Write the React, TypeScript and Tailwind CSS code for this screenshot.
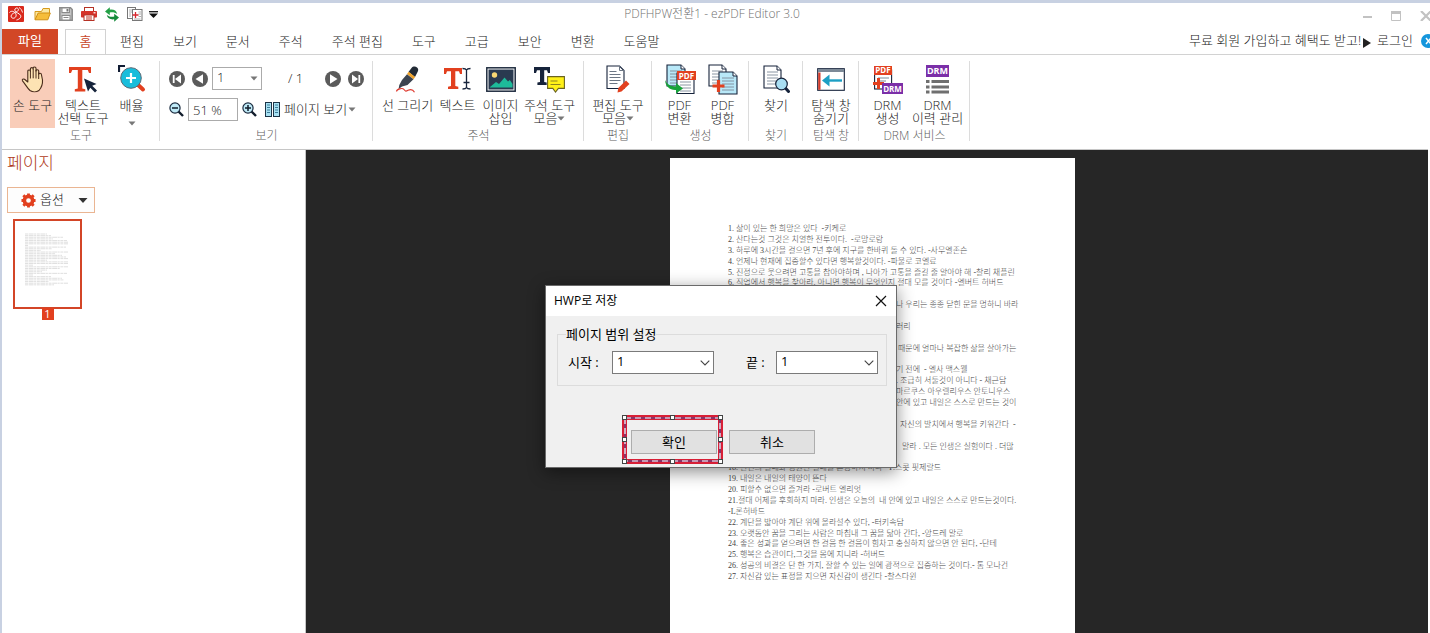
import type { ReactNode } from "react";

const tabs = ["편집", "보기", "문서", "주석", "주석 편집", "도구", "고급", "보안", "변환", "도움말"];

type Line = { text: string; tail?: boolean };

const lines: Line[] = [
  { text: "1. 삶이 있는 한 희망은 있다  -키케로" },
  { text: "2. 산다는것 그것은 치열한 전투이다.  -로망로랑" },
  { text: "3. 하루에 3시간을 걸으면 7년 후에 지구를 한바퀴 돌 수 있다. -사무엘존슨" },
  { text: "4. 언제나 현재에 집중할수 있다면 행복할것이다. -파울로 코엘료" },
  { text: "5. 진정으로 웃으려면 고통을 참아야하며 , 나아가 고통을 즐길 줄 알아야 해 -찰리 채플린" },
  { text: "6. 직업에서 행복을 찾아라. 아니면 행복이 무엇인지 절대 모를 것이다 -엘버트 허버드" },
  { text: "" },
  { text: "나 우리는 종종 닫힌 문을 멍하니 바라", tail: true },
  { text: "" },
  { text: "러리", tail: true },
  { text: "" },
  { text: " 때문에 얼마나 복잡한 삶을 살아가는", tail: true },
  { text: "" },
  { text: "기 전에  - 엘사 맥스웰", tail: true },
  { text: ". 조급히 서둘것이 아니다 - 채근담", tail: true },
  { text: "마르쿠스 아우렐리우스 안토니우스", tail: true },
  { text: "안에 있고 내일은 스스로 만드는 것이", tail: true },
  { text: "" },
  { text: "  자신의 발치에서 행복을 키워간다  -", tail: true },
  { text: "" },
  { text: "   말라 . 모든 인생은 실험이다 . 더많", tail: true },
  { text: "" },
  { text: "18. 한번의 실패와 영원한 실패를 혼동하지 마라  -F.스콧 핏제랄드" },
  { text: "19. 내일은 내일의 태양이 뜬다" },
  { text: "20. 피할수 없으면 즐겨라 -로버트 엘리엇" },
  { text: "21.절대 어제를 후회하지 마라. 인생은 오늘의  내 안에 있고 내일은 스스로 만드는것이다." },
  { text: "-L론허바드" },
  { text: "22. 계단을 밟아야 계단 위에 올라설수 있다, -터키속담" },
  { text: "23. 오랫동안 꿈을 그리는 사람은 마침내 그 꿈을 닮아 간다, -앙드레 말로" },
  { text: "24. 좋은 성과를 얻으려면 한 걸음 한 걸음이 힘차고 충실하지 않으면 안 된다, -단테" },
  { text: "25. 행복은 습관이다,그것을 몸에 지니라 -허버드" },
  { text: "26. 성공의 비결은 단 한 가지, 잘할 수 있는 일에 광적으로 집중하는 것이다.- 톰 모나건" },
  { text: "27. 자신감 있는 표정을 지으면 자신감이 생긴다 -찰스다윈" },
];

const thumbWidths = [22, 26, 38, 28, 42, 43, 43, 3, 41, 27, 16, 43, 30, 37, 41, 43, 22, 43, 43, 8, 43, 35, 22, 17, 42, 8, 26, 37, 39, 24, 43, 29];

function Caret({ className = "" }: { className?: string }) {
  return (
    <svg aria-hidden="true" viewBox="0 0 8 5" className={`h-[5px] w-2 shrink-0 ${className}`}>
      <path d="M0.5 0.5h7L4 4.5z" fill="currentColor" />
    </svg>
  );
}

function LogoIcon() {
  return (
    <svg viewBox="0 0 16 16" className="size-4">
      <rect width="16" height="16" rx="1" fill="#d9291c" />
      <path d="M1.500 6.500C3 4.600 6 5 7.500 7.200c1.700 2.700-.3 5.300-2.600 5-2.600-.5-2.200-3.700.6-5 2.600-1.200 5.300-2 4.900-4C9.900 1.200 6.500 1.800 6.800 4.200c.5 2.600 5 3 5.900 5.400.6 2-1.500 3.800-4.200 4.400" fill="none" stroke="#fff" strokeWidth="1" />
      <path d="M11 1.500c2 1 3 3 3.500 5" fill="none" stroke="#fff" strokeWidth=".9" />
    </svg>
  );
}

function FolderIcon() {
  return (
    <svg viewBox="0 0 17 14" className="h-[14px] w-[17px]">
      <path d="M1 12.500V4.500h6.500l1.500-3h6.500v4.500" fill="#fbe7a0" stroke="#d79a1c" />
      <path d="M1 12.800 4.200 6H16.300l-2.500 6.800z" fill="#f6bd3a" stroke="#d08f14" strokeLinejoin="round" />
    </svg>
  );
}

function SaveIcon() {
  return (
    <svg viewBox="0 0 14 14" className="size-[14px]">
      <path d="M.8.800h10.700l1.700 1.700v10.700H.8z" fill="#c4c4c4" stroke="#8a8a8a" strokeWidth="1.500" />
      <rect x="3" y="1" width="7.500" height="4.500" fill="#fff" stroke="#8a8a8a" />
      <rect x="7.500" y="2" width="2" height="2.500" fill="#777" />
      <rect x="3" y="8.500" width="8" height="4.500" fill="#fff" stroke="#8a8a8a" />
      <path d="M4.500 10.500h5" stroke="#8a8a8a" />
    </svg>
  );
}

function PrintIcon() {
  return (
    <svg viewBox="0 0 16 14" className="h-[14px] w-4">
      <rect x="3.500" y=".5" width="9" height="4" fill="#fff" stroke="#b53124" />
      <rect x="0" y="4" width="16" height="6.500" rx=".8" fill="#d5332a" />
      <rect x="3" y="8" width="10" height="5.500" fill="#fff" stroke="#b53124" />
      <path d="M5 10h6M5 12h6" stroke="#c0392b" />
      <rect x="12.500" y="5.200" width="2" height="1.200" fill="#fff" />
    </svg>
  );
}

function RefreshIcon() {
  return (
    <svg viewBox="0 0 14 15" className="h-[15px] w-[14px]">
      <path d="M0 4.500 4.800.2v2.500c4-.5 6.700 1 7.400 4.300C10 5.200 7.500 5 4.800 5.400V8.200z" fill="#22a045" />
      <path d="M14 10.500 9.200 14.800v-2.500c-4 .5-6.700-1-7.400-4.300C4 9.800 6.500 10 9.200 9.600V6.800z" fill="#158a3a" />
    </svg>
  );
}

function CompareIcon() {
  return (
    <svg viewBox="0 0 16 14" className="h-[14px] w-4">
      <rect x=".5" y=".5" width="8" height="11" fill="#fff" stroke="#777" />
      <path d="M2 3h5M2 5h3M2 7h2M2 9h2" stroke="#999" strokeWidth=".8" />
      <rect x="5.500" y="2.500" width="9.500" height="11" fill="#fff" stroke="#777" />
      <path d="M11.500 5h2.500M11.500 7h2.500M11.500 9.500h2.500M7 12h6.500" stroke="#999" strokeWidth=".8" />
      <path d="M8.500 5v6M5.500 8h6" stroke="#d9262c" strokeWidth="1.300" />
    </svg>
  );
}

function HandIcon() {
  return (
    <svg viewBox="0 0 24 27" className="h-[27px] w-6">
      <path d="M9 24.500C6.500 22.500 4.500 18.500 1.500 14.800c-.8-1.300.8-2.300 2-1.500L6.800 16V5.200c0-1.700 2.600-1.700 2.600 0V3c0-1.800 2.800-1.800 2.800 0v-.700c0-1.800 2.800-1.800 2.800 0V5c0-1.700 2.700-1.700 2.700 0v3.300c.1-1.500 2.700-1.500 2.700.2L21.500 14c.3 4-1 7.500-3.500 10.500-2.500 1.700-6.500 1.700-9 0z" fill="#fde3b3" stroke="#4a2c1c" strokeWidth="1.100" strokeLinejoin="round" />
      <path d="M9.400 5v7.500M12.200 3v9.300M15 4v8.500M17.700 6.500v6.500" stroke="#4a2c1c" strokeWidth="1" />
    </svg>
  );
}

function TextSelectIcon() {
  return (
    <svg viewBox="0 0 30 27" className="h-[27px] w-[30px]">
      <path d="M1 1h22v6h-2L19.800 4h-5.500v18.500l3 .7V25.500H6.800V23.200l3-.7V4H4.300L3 7H1z" fill="#e2401f" />
      <path d="M16 12.500 28.500 18l-4.300 1.700L29 24.600 27 26.600 22.300 21.800 20 25.500z" fill="#16233b" />
    </svg>
  );
}

function ZoomAreaIcon() {
  return (
    <svg viewBox="0 0 28 28" className="size-7">
      <path d="M1 7V1h6" fill="none" stroke="#111c33" strokeWidth="2.200" />
      <path d="m18.500 18.500 6.500 6" stroke="#e2401f" strokeWidth="4" strokeLinecap="round" />
      <circle cx="13" cy="13" r="10.300" fill="#19bddb" stroke="#5a6b78" strokeWidth="1" />
      <path d="M13 8v10M8 13h10" stroke="#fff" strokeWidth="2.200" />
    </svg>
  );
}

function NavIcon({ kind }: { kind: "first" | "prev" | "next" | "last" }) {
  const flip = kind === "next" || kind === "last";
  const bar = kind === "first" || kind === "last";
  return (
    <svg viewBox="0 0 16 16" className={flip ? "size-4 -scale-x-100" : "size-4"}>
      <circle cx="8" cy="8" r="8" fill="#5b5b5b" />
      {bar ? (
        <>
          <path d="M4.700 4v8" stroke="#fff" strokeWidth="1.800" />
          <path d="M12 3.500v9L6 8z" fill="#fff" />
        </>
      ) : (
        <path d="M11 3.200v9.600L3.500 8z" fill="#fff" />
      )}
    </svg>
  );
}

function MagnifierIcon({ plus }: { plus?: boolean }) {
  return (
    <svg viewBox="0 0 15 15" className="size-[15px]">
      <path d="m9.500 9.500 4.500 4.500" stroke="#111c2b" strokeWidth="2.400" />
      <circle cx="6" cy="6" r="5.100" fill="#bfeaf7" stroke="#1b2c40" strokeWidth="1.200" />
      <path d={plus ? "M3 6h6M6 3v6" : "M3 6h6"} stroke="#111c2b" strokeWidth="1.500" />
    </svg>
  );
}

function PagesIcon() {
  return (
    <svg viewBox="0 0 15 15" className="size-[15px]">
      <rect x=".5" y=".5" width="6" height="14" fill="#a8e1f3" stroke="#1c3447" />
      <rect x="8.500" y=".5" width="6" height="14" fill="#a8e1f3" stroke="#1c3447" />
      <path d="M2 3h3M2 5.500h3M2 8h3M2 10.500h3M10 3h3M10 5.500h3M10 8h3M10 10.500h3" stroke="#3d7e99" />
    </svg>
  );
}

function PenIcon() {
  return (
    <svg viewBox="0 0 28 28" className="size-7">
      <path d="M17.500 3c2.500-3.500 8.300-.5 6.300 3.500L21 12l-6.500-5z" fill="#222b36" />
      <path d="m14.700 6.800 6.400 5.200-1.600 2.200-6.500-5.200z" fill="#f0a32a" />
      <path d="m13 9.200 6.500 5L13.500 20l-5.500 1.500-3.500 2.700.8-4.200 2.700-5z" fill="#3c4450" />
      <path d="M2.500 26.500c0-2.500 6-4 7.500-2s2 2 4 .8c2.500-1.300 5-.8 6.500 2" fill="none" stroke="#df3b30" strokeWidth="1.200" />
    </svg>
  );
}

function TextIcon() {
  return (
    <svg viewBox="0 0 27 24" className="h-6 w-[27px]">
      <path d="M0 1h18v6h-2l-1-2.800h-3.700V19l3 .7V22H4v-2.300l3-.7V4.200H3L2 7H0z" fill="#e2401f" />
      <path d="M18.500 1.500c2 0 3.500.5 4 1.500.5-1 2-1.500 4-1.500M22.500 3v17M19.500 15.500h6M18.500 22c2 0 3.500-.5 4-1.500.5 1 2 1.500 4 1.500" fill="none" stroke="#16233b" strokeWidth="1.300" />
    </svg>
  );
}

function ImageIcon() {
  return (
    <svg viewBox="0 0 30 25" className="h-[25px] w-[30px]">
      <rect x=".8" y=".8" width="28.400" height="23.400" fill="#fff" stroke="#1f2c3f" strokeWidth="1.500" />
      <rect x="2.500" y="2.500" width="25" height="20" fill="#2a3a50" />
      <circle cx="8.500" cy="8" r="2.700" fill="#f7d774" />
      <path d="m4 20 6-5 3 2 5.500-6.500 3.500 4 1.800-1.500L26.500 17v3.500H4z" fill="#1dbb9a" />
    </svg>
  );
}

function NoteIcon() {
  return (
    <svg viewBox="0 0 31 27" className="h-[27px] w-[31px]">
      <path d="M0 1h16v6h-2l-1-2.800h-2.800V16l2.500.6V19H3.400v-2.400L6 16V4.200H3L2 7H0z" fill="#16233b" />
      <path d="M13.600 10.600h16.800v11.800h-6L21.500 26l-2.700-3.600h-5.200z" fill="#fff017" stroke="#6b6420" strokeWidth="1.100" />
      <path d="M16.500 15h7M16.500 18.500h10" stroke="#8d8320" strokeWidth="1.200" />
    </svg>
  );
}

function EditPageIcon() {
  return (
    <svg viewBox="0 0 24 28" className="h-7 w-6">
      <path d="M1 1h12.500L18 5.500V23.500H1z" fill="#fff" stroke="#16233b" strokeWidth="1.100" />
      <path d="M13.500 1v4.500H18M3.500 6.500h7M3.500 9.500h11M3.500 12.500h11M3.500 15.500h11M3.500 18.500h8" fill="none" stroke="#6c7684" strokeWidth="1" />
      <path d="m20 15.500 3.500 3.500-8 7.500-4 1 .8-4.500z" fill="#e2401f" />
    </svg>
  );
}

function Sheet({ x, y, w, h, fill }: { x: number; y: number; w: number; h: number; fill: string }) {
  const fold = 4;
  const rows = [6, 9, 12, 15, 18].filter((row) => row < h - 2);
  return (
    <g transform={`translate(${x} ${y})`}>
      <path d={`M0 0H${w - fold}L${w} ${fold}V${h}H0z`} fill={fill} stroke="#16233b" strokeWidth="1.100" />
      <path d={`M${w - fold} 0V${fold}H${w}`} fill="#fff" stroke="#16233b" strokeWidth="1" />
      {rows.map((row) => (
        <path key={row} d={`M3 ${row}H${w - 3}`} stroke="#7d8b99" strokeWidth=".9" />
      ))}
    </g>
  );
}

function ConvertIcon() {
  return (
    <svg viewBox="0 0 32 31" className="h-[31px] w-8">
      <Sheet x={3} y={1} w={18} h={21} fill="#b8e8f8" />
      <Sheet x={13} y={9} w={17} h={20.500} fill="#fff" />
      <rect x="13" y="7" width="19" height="9" fill="#e2401f" />
      <text x="22.500" y="14.500" textAnchor="middle" fontSize="8" fontWeight="700" fontFamily="Open Sans, sans-serif" fill="#fff">PDF</text>
      <path d="M1 16c2 4.500 6 6.500 11 6.500V19l7 5.500-7 5V26C6 26.500 1.500 22.500 1 16z" fill="#17a33a" />
    </svg>
  );
}

function MergeIcon() {
  return (
    <svg viewBox="0 0 30 31" className="h-[31px] w-[30px]">
      <Sheet x={1} y={1} w={17} h={21} fill="#fff" />
      <Sheet x={11} y={8} w={18} h={22} fill="#b8e8f8" />
      <path d="M10.500 16v12M4.500 22h12" stroke="#e2401f" strokeWidth="3.200" />
    </svg>
  );
}

function FindIcon() {
  return (
    <svg viewBox="0 0 27 28" className="h-7 w-[27px]">
      <Sheet x={1} y={1} w={17} h={22} fill="#fff" />
      <path d="m21.500 22 4 4.500" stroke="#16233b" strokeWidth="3" strokeLinecap="round" />
      <circle cx="18.500" cy="19" r="5.800" fill="#a9dff4" stroke="#16233b" strokeWidth="1.200" />
    </svg>
  );
}

function PaneIcon() {
  return (
    <svg viewBox="0 0 28 23" className="h-[23px] w-7">
      <rect x=".7" y=".7" width="26.600" height="21.600" fill="#fff" stroke="#16233b" strokeWidth="1.100" />
      <rect x="1" y="1" width="26" height="3" fill="#7c8997" />
      <rect x="1.200" y="4.500" width="2.300" height="17.300" fill="#d23b2b" />
      <path d="M7 12.500h18" stroke="#1d9fc4" strokeWidth="2.400" />
      <path d="M5 12.500 12.500 6.500v12z" fill="#1d9fc4" />
    </svg>
  );
}

function DrmCreateIcon() {
  return (
    <svg viewBox="0 0 31 29" className="h-[29px] w-[31px]">
      <rect x="2.600" y="5" width="17" height="19" fill="#fff" stroke="#16233b" strokeWidth="1.100" />
      <path d="M6 13h11M6 16h8" stroke="#7d8b99" />
      <rect x="2" y="1" width="18" height="9" fill="#e2401f" />
      <text x="11" y="8.400" textAnchor="middle" fontSize="8" fontWeight="700" fontFamily="Open Sans, sans-serif" fill="#fff">PDF</text>
      <path d="M6.500 13v11M1 18.500h11" stroke="#e2401f" strokeWidth="3" />
      <rect x="10" y="18" width="21" height="11" fill="#7b2fa8" />
      <text x="20.500" y="26.500" textAnchor="middle" fontSize="8" fontWeight="700" fontFamily="Open Sans, sans-serif" fill="#fff">DRM</text>
    </svg>
  );
}

function DrmHistoryIcon() {
  return (
    <svg viewBox="0 0 24 29" className="h-[29px] w-6">
      <rect x="0" y="0" width="23" height="12" fill="#7b2fa8" />
      <text x="11.500" y="9.200" textAnchor="middle" fontSize="9" fontWeight="700" fontFamily="Open Sans, sans-serif" fill="#fff">DRM</text>
      <path d="M0 16.500h3.500M5.500 16.500H23M0 22h3.500M5.500 22H23M0 27h3.500M5.500 27H23" stroke="#6f6f6f" strokeWidth="3" />
    </svg>
  );
}

function GearIcon() {
  return (
    <svg viewBox="0 0 16 16" className="size-[15px]">
      <circle cx="8" cy="8" r="4.400" fill="none" stroke="#e2401f" strokeWidth="3.800" />
      <path d="M8 .5v3M8 12.500v3M.5 8h3M12.500 8h3M2.500 2.500l2.200 2.200M11.300 11.300l2.200 2.200M2.500 13.500l2.200-2.200M11.300 4.700l2.200-2.200" stroke="#e2401f" strokeWidth="3" />
    </svg>
  );
}

function ToolButton({ icon, label, width, active, arrow }: { icon: ReactNode; label: string[]; width: string; active?: boolean; arrow?: "inline" | "below" }) {
  return (
    <button type="button" className={`flex h-[69px] shrink-0 flex-col items-center whitespace-nowrap ${width} ${active ? "bg-[#f9cdb9]" : ""}`}>
      <span className="flex h-10 items-center justify-center">{icon}</span>
      {label.map((row, i) => (
        <span key={row} className="flex items-center text-[13px] leading-[13px]">
          {row}
          {arrow === "inline" && i === label.length - 1 && <Caret className="text-[#777]" />}
        </span>
      ))}
      {arrow === "below" && <Caret className="mt-[9px] text-[#777]" />}
    </button>
  );
}

function Group({ title, width, children }: { title: string; width: string; children: ReactNode }) {
  return (
    <section aria-label={title} className={`relative flex shrink-0 flex-col ${width}`}>
      <div className="flex h-[69px] justify-center">{children}</div>
      <h2 className="text-center text-[12px] leading-4 text-[#5f5f5f]">{title}</h2>
      <span className="absolute top-0.5 right-0 h-20 w-px bg-[#dcdcdc]" />
    </section>
  );
}

function PageSelect({ id }: { id: string }) {
  return (
    <span className="relative">
      <select id={id} className="block h-[23px] w-[102px] appearance-none border border-[#7a7a7a] bg-white px-1 pb-0.5 text-[13px] leading-[19px] text-black">
        <option>1</option>
      </select>
      <svg aria-hidden="true" viewBox="0 0 10 6" className="pointer-events-none absolute top-[9px] right-1 h-1.5 w-2.5">
        <path d="m.7.700 4.300 4.300L9.300.700" fill="none" stroke="#444" strokeWidth="1.100" />
      </svg>
    </span>
  );
}

function Marker() {
  const spots = [
    "-top-[2px] -left-[2px]", "-top-[2px] left-[46px]", "-top-[2px] -right-[2px]",
    "top-[20px] -left-[2px]", "top-[20px] -right-[2px]",
    "-bottom-[2px] -left-[2px]", "-bottom-[2px] left-[46px]", "-bottom-[2px] -right-[2px]",
  ];
  return (
    <span aria-hidden="true" className="pointer-events-none absolute -top-[15px] -left-[9px] h-[49px] w-[101px] border-[5px] border-[#d81f36]">
      <svg className="absolute -top-[3px] -left-[3px] h-[45px] w-[97px]">
        <rect x="1" y="1" width="95" height="43" fill="none" stroke="#8a3468" strokeWidth="2" />
        <rect x="1" y="1" width="95" height="43" fill="none" stroke="#fff" strokeWidth="1.200" strokeDasharray="6 4" />
      </svg>
      <span className="absolute -inset-[3px]">
        {spots.map((spot) => (
          <span key={spot} className={`absolute size-[5px] border border-[#444] bg-white ${spot}`} />
        ))}
      </span>
    </span>
  );
}

function SaveDialog() {
  return (
    <div role="dialog" aria-labelledby="save-title" className="absolute top-[282px] left-[543px] w-[352px] border border-[#6a6a6a] bg-[#f0f0f0] pb-[13px] text-[13px] font-normal text-black shadow-[0_4px_16px_rgba(0,0,0,0.45)]">
      <header className="flex h-[30px] items-center justify-between bg-white pr-[9px] pl-2">
        <h2 id="save-title" className="text-[12px]">HWP로 저장</h2>
        <button type="button" aria-label="닫기">
          <svg viewBox="0 0 12 12" className="size-3">
            <path d="m1 1 10 10M11 1 1 11" stroke="#111" strokeWidth="1.200" />
          </svg>
        </button>
      </header>
      <fieldset className="mr-[13px] ml-[11px] mt-2 h-[62px] border border-[#dcdcdc] px-2">
        <legend className="text-[13px] leading-5">페이지 범위 설정</legend>
        <div className="flex items-center pt-[7px] pl-0.5">
          <label htmlFor="page-from" className="w-11">시작 :</label>
          <PageSelect id="page-from" />
          <label htmlFor="page-to" className="ml-8 w-[30px] whitespace-nowrap">끝 :</label>
          <PageSelect id="page-to" />
        </div>
      </fieldset>
      <footer className="mt-[44px] flex justify-center gap-3 pl-1">
        <span className="relative">
          <button type="button" className="block h-6 w-[86px] border border-[#adadad] bg-[#e1e1e1] leading-5">확인</button>
          <Marker />
        </span>
        <button type="button" className="block h-6 w-[86px] border border-[#adadad] bg-[#e1e1e1] leading-5">취소</button>
      </footer>
    </div>
  );
}

export default function App() {
  return (
    <div lang="ko" className="relative flex h-screen flex-col overflow-hidden border-t-[3px] border-l-2 border-[#c8d1e2] bg-white pr-0.5 font-['Open_Sans','Noto_Sans_CJK_KR',sans-serif] text-[13px] font-light text-[#222]">
      <header className="-mr-0.5 grid h-[26px] shrink-0 grid-cols-[1fr_auto_1fr] items-center overflow-hidden">
        <div className="flex items-center gap-2 pb-1 pl-1.5">
          <LogoIcon />
          <span className="ml-0.5 flex"><FolderIcon /></span>
          <SaveIcon />
          <PrintIcon />
          <RefreshIcon />
          <span className="flex"><CompareIcon /></span>
          <svg viewBox="0 0 9 7" className="-ml-0.5 h-[7px] w-[9px]">
            <path d="M0 .7h9" stroke="#111" strokeWidth="1.300" />
            <path d="M0 2.500h9L4.500 7z" fill="#111" />
          </svg>
        </div>
        <h1 className="pr-2 pb-1 text-[12px] text-[#707070]">PDFHPW전환1 - ezPDF Editor 3.0</h1>
        <div className="-mr-0.5 flex items-center justify-end gap-[19px] text-[#c2c2c2]">
          <svg viewBox="0 0 10 10" className="size-2.5"><path d="M1 6h9" stroke="currentColor" strokeWidth="2" /></svg>
          <svg viewBox="0 0 10 10" className="size-2.5"><path d="M.5.500h9v9h-9z" fill="none" stroke="currentColor" strokeWidth="1" /><path d="M0 1.500h10" stroke="currentColor" strokeWidth="3" /></svg>
          <svg viewBox="0 0 12 10" className="h-2.5 w-3"><path d="m1 0 10 10M11 0 1 10" stroke="currentColor" strokeWidth="2.200" /></svg>
        </div>
      </header>

      <nav className="-mr-0.5 flex h-[26px] shrink-0 overflow-hidden border-b border-[#d2d2d2] whitespace-nowrap">
        <button type="button" className="h-[25px] w-14 bg-[#d24726] pb-0.5 font-normal text-white">파일</button>
        <button type="button" className="ml-[7px] h-[26px] w-[41px] border border-b-0 border-[#d2d2d2] bg-white pb-0.5 font-normal text-[#c8472b]">홈</button>
        <div className="flex items-center gap-[29px] pl-3.5">
          {tabs.map((tab) => (
            <button key={tab} type="button">{tab}</button>
          ))}
        </div>
        <div className="-mr-[7px] ml-auto flex items-center gap-1.5 pb-0.5">
          <a href="#join" className="flex items-center">
            무료 회원 가입하고 혜택도 받고!
            <svg viewBox="0 0 8 10" className="mt-1 ml-0.5 h-2.5 w-2"><path d="M0 0v10l8-5z" fill="#222" /></svg>
          </a>
          <a href="#login">로그인</a>
          <svg viewBox="0 0 16 14" className="ml-0.5 h-3.5 w-4">
            <circle cx="7" cy="7" r="7" fill="#1596dc" />
            <path d="M5 4l5 6M10 4l-5 6" stroke="#fff" strokeWidth="1.500" />
          </svg>
        </div>
      </nav>

      <div className="flex h-[95px] shrink-0 overflow-hidden border-b border-[#c6c6c6] pt-1">
        <Group title="도구" width="w-[158px]">
          <ToolButton icon={<HandIcon />} label={["손 도구"]} width="w-[45px]" active />
          <ToolButton icon={<TextSelectIcon />} label={["텍스트", "선택 도구"]} width="w-[56px]" />
          <ToolButton icon={<ZoomAreaIcon />} label={["배율"]} width="w-[41px]" arrow="below" />
        </Group>
        <Group title="보기" width="w-[213px]">
          <div className="flex w-full flex-col gap-2 pt-2 pl-[9px]">
            <div className="flex h-[23px] items-center gap-[7px]">
              <button type="button" aria-label="첫 페이지"><NavIcon kind="first" /></button>
              <button type="button" aria-label="이전 페이지"><NavIcon kind="prev" /></button>
              <span className="relative -ml-[3px]">
                <select aria-label="쪽 번호" className="block h-[23px] w-[50px] appearance-none border border-[#ababab] bg-white px-1 pb-0.5 leading-[19px]">
                  <option>1</option>
                </select>
                <Caret className="pointer-events-none absolute top-[9px] right-1 text-[#777]" />
              </span>
              <span className="w-[49px] pl-1 text-center">/ 1</span>
              <button type="button" aria-label="다음 페이지"><NavIcon kind="next" /></button>
              <button type="button" aria-label="마지막 페이지"><NavIcon kind="last" /></button>
            </div>
            <div className="flex h-[23px] items-center gap-1">
              <button type="button" aria-label="축소"><MagnifierIcon /></button>
              <input aria-label="배율" defaultValue="51 %" className="h-[23px] w-[50px] border border-[#ababab] bg-white px-1" />
              <button type="button" aria-label="확대"><MagnifierIcon plus /></button>
              <button type="button" className="flex items-center gap-1 pl-1 whitespace-nowrap">
                <PagesIcon />
                <span className="flex items-center">페이지 보기<Caret className="ml-px text-[#777]" /></span>
              </button>
            </div>
          </div>
        </Group>
        <Group title="주석" width="w-[211px]">
          <ToolButton icon={<PenIcon />} label={["선 그리기"]} width="w-[56px]" />
          <ToolButton icon={<TextIcon />} label={["텍스트"]} width="w-[44px]" />
          <ToolButton icon={<ImageIcon />} label={["이미지", "삽입"]} width="w-[42px]" />
          <ToolButton icon={<NoteIcon />} label={["주석 도구", "모음"]} width="w-[56px]" arrow="inline" />
        </Group>
        <Group title="편집" width="w-[68px]">
          <ToolButton icon={<EditPageIcon />} label={["편집 도구", "모음"]} width="w-[60px]" arrow="inline" />
        </Group>
        <Group title="생성" width="w-[97px]">
          <ToolButton icon={<ConvertIcon />} label={["PDF", "변환"]} width="w-[44px]" />
          <ToolButton icon={<MergeIcon />} label={["PDF", "병합"]} width="w-[42px]" />
        </Group>
        <Group title="찾기" width="w-[54px]">
          <ToolButton icon={<FindIcon />} label={["찾기"]} width="w-[44px]" />
        </Group>
        <Group title="탐색 창" width="w-[56px]">
          <ToolButton icon={<PaneIcon />} label={["탐색 창", "숨기기"]} width="w-[48px]" />
        </Group>
        <Group title="DRM 서비스" width="w-[111px]">
          <ToolButton icon={<DrmCreateIcon />} label={["DRM", "생성"]} width="w-[46px]" />
          <ToolButton icon={<DrmHistoryIcon />} label={["DRM", "이력 관리"]} width="w-[54px]" />
        </Group>
      </div>

      <div className="flex min-h-0 flex-1">
        <aside className="w-[304px] shrink-0 border-r border-[#c6c6c6] pl-[5px]">
          <h2 className="h-[37px] text-[17px] leading-[26px] text-[#b03a22]">페이지</h2>
          <button type="button" className="flex h-[26px] w-[88px] items-center border border-[#eab592] bg-[#fdfdfd] pl-[13px]">
            <GearIcon />
            <span className="ml-1">옵션</span>
            <svg aria-hidden="true" viewBox="0 0 10 5" className="mr-1.5 ml-auto h-[5px] w-2.5"><path d="M.5 0h9L5 5z" fill="#333" /></svg>
          </button>
          <figure className="mt-1.5 ml-1.5 flex w-[69px] flex-col items-center">
            <div className="h-[90px] w-full border-2 border-[#d34527] bg-white pt-3 pl-2.5">
              <svg viewBox="0 0 44 54" className="h-[54px] w-11">
                {thumbWidths.map((w, i) => (
                  <path key={i} d={`M0 ${1 + i * 1.640}h${w}`} stroke="#c9c9c9" strokeWidth=".6" strokeDasharray="3 .6 5 .5 2 .7" />
                ))}
              </svg>
            </div>
            <figcaption className="-mt-px h-3 w-3 bg-[#e2401f] text-center text-[11px] leading-3 font-normal text-white">1</figcaption>
          </figure>
        </aside>
        <main className="flex flex-1 justify-center overflow-hidden bg-[#262626] pt-2 pl-[11px]">
          <article className="w-[405px] bg-white pt-[65px] pl-[58px]">
            <div className="grid h-[359px] auto-rows-fr font-['Liberation_Serif','Noto_Sans_CJK_KR',serif] text-[8px] leading-[11px] whitespace-pre text-[#444]">
              {lines.map((line, i) => (
                <p key={i} className={line.tail ? "pl-[168px]" : ""}>{line.text}</p>
              ))}
            </div>
          </article>
        </main>
      </div>

      <SaveDialog />
    </div>
  );
}
